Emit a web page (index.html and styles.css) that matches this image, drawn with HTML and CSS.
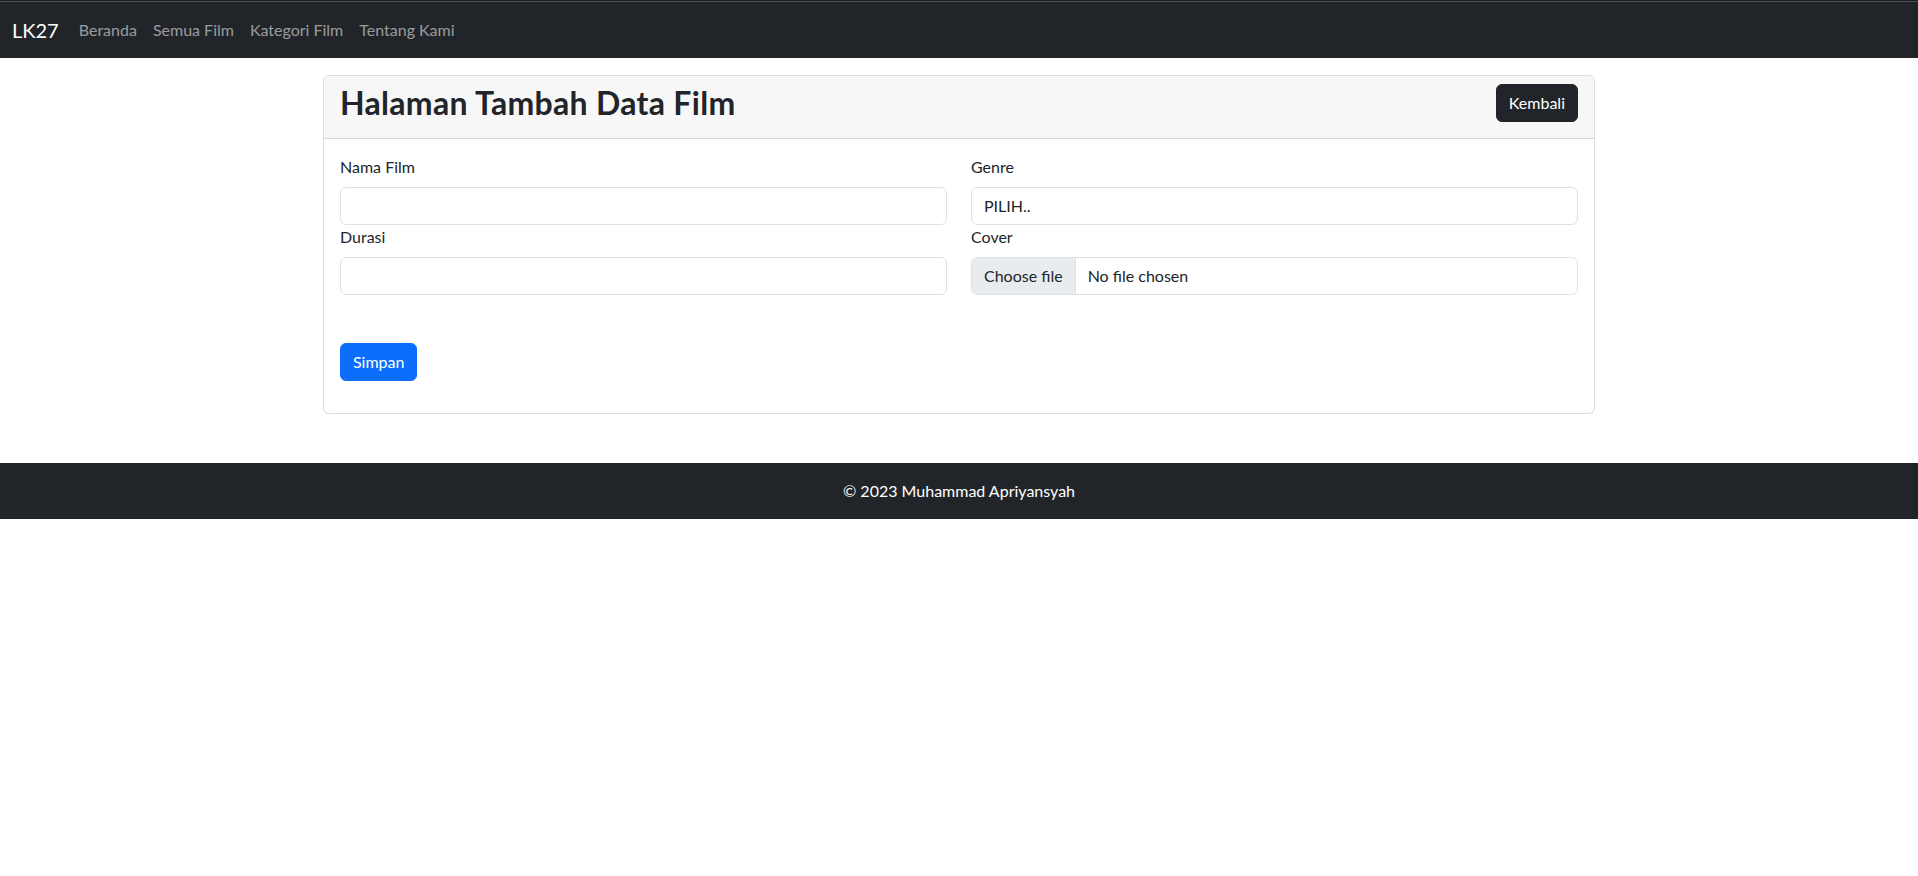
FILE: index.html
```html
<!DOCTYPE html>
<html lang="id">
<head>
<meta charset="utf-8">
<title>Halaman Tambah Data Film</title>
<link rel="stylesheet" href="styles.css">
</head>
<body>
<nav class="navbar">
  <a class="brand" href="#">LK27</a>
  <ul class="nav">
    <li><a href="#">Beranda</a></li>
    <li><a href="#">Semua Film</a></li>
    <li><a href="#">Kategori Film</a></li>
    <li><a href="#">Tentang Kami</a></li>
  </ul>
</nav>
<main class="main">
  <div class="card">
    <div class="card-header">
      <h2 class="title">Halaman Tambah Data Film</h2>
      <a class="btn btn-dark" href="#">Kembali</a>
    </div>
    <form class="card-body">
      <div class="row">
        <div class="col">
          <label class="label" for="nama">Nama Film</label>
          <input class="control" id="nama" type="text">
          <label class="label" for="durasi">Durasi</label>
          <input class="control" id="durasi" type="text">
        </div>
        <div class="col">
          <label class="label" for="genre">Genre</label>
          <select class="control select" id="genre"><option>PILIH..</option></select>
          <span class="label">Cover</span>
          <label class="control file" for="cover">
            <span class="file-btn">Choose file</span>
            <span class="file-name">No file chosen</span>
            <input class="file-input" id="cover" type="file">
          </label>
        </div>
      </div>
      <button class="btn btn-primary save" type="button">Simpan</button>
    </form>
  </div>
</main>
<footer class="footer">© 2023 Muhammad Apriyansyah</footer>
</body>
</html>
```
FILE: styles.css
```css
* { box-sizing: border-box; }
body {
  margin: 0;
  font-family: Lato, "Noto Sans", sans-serif;
  font-size: 16px;
  line-height: 1.5;
  color: #212529;
  background: #fff;
}
a { text-decoration: none; }

.navbar {
  display: flex;
  align-items: center;
  background: #212529;
  border-top: 1px solid #1b1d20;
  box-shadow: inset 0 1px 0 #4e5052;
  padding: 9px 12px 8px;
  height: 58px;
}
.brand {
  color: #fff;
  font-size: 20px;
  line-height: 30px;
  padding: 5px 0;
  margin-right: 12px;
}
.nav {
  display: flex;
  list-style: none;
  margin: 0;
  padding: 0;
}
.nav a {
  display: block;
  padding: 8px 8px;
  color: rgba(255, 255, 255, 0.55);
  line-height: 24px;
}

.main {
  padding-top: 17px;
  display: flex;
  justify-content: center;
}
.card {
  width: 1272px;
  border: 1px solid rgba(0, 0, 0, 0.13);
  border-radius: 6px;
  background: #fff;
}
.card-header {
  display: flex;
  justify-content: space-between;
  align-items: flex-start;
  padding: 8px 16px;
  background: #f7f7f7;
  border-bottom: 1px solid rgba(0, 0, 0, 0.13);
  border-radius: 5px 5px 0 0;
}
.title {
  margin: 0 0 8px;
  font-size: 32px;
  font-weight: 700;
  line-height: 38px;
  letter-spacing: 0.3px;
  color: #212529;
}
.btn {
  display: inline-block;
  font: inherit;
  font-size: 16px;
  line-height: 24px;
  padding: 6px 12px;
  border-radius: 6px;
  border: 1px solid transparent;
  color: #fff;
}
.btn-dark { background: #212529; border-color: #212529; }
.btn-primary { background: #0d6efd; border-color: #0d6efd; }

.card-body {
  padding: 16px 16px 32px;
}
.row {
  display: grid;
  grid-template-columns: 1fr 1fr;
  column-gap: 24px;
}
.col {
  display: flex;
  flex-direction: column;
}
.label {
  display: block;
  line-height: 24px;
  margin-bottom: 8px;
}
.control {
  display: block;
  width: 100%;
  height: 38px;
  padding: 6px 12px;
  font: inherit;
  font-size: 16px;
  line-height: 24px;
  color: #212529;
  background: #fff;
  border: 1px solid #dee2e6;
  border-radius: 6px;
}
.select {
  appearance: none;
  -webkit-appearance: none;
}
.file {
  display: flex;
  align-items: stretch;
  padding: 0;
  overflow: hidden;
  cursor: pointer;
}
.file-btn {
  display: flex;
  align-items: center;
  padding: 0 12px;
  background: #e9ecef;
  border-right: 1px solid #dee2e6;
}
.file-name {
  display: flex;
  align-items: center;
  padding-left: 12px;
}
.file-input {
  display: none;
}
.save {
  margin-top: 48px;
}

.footer {
  margin-top: 49px;
  height: 56px;
  background: #212529;
  color: #fff;
  text-align: center;
  line-height: 56px;
}
```
